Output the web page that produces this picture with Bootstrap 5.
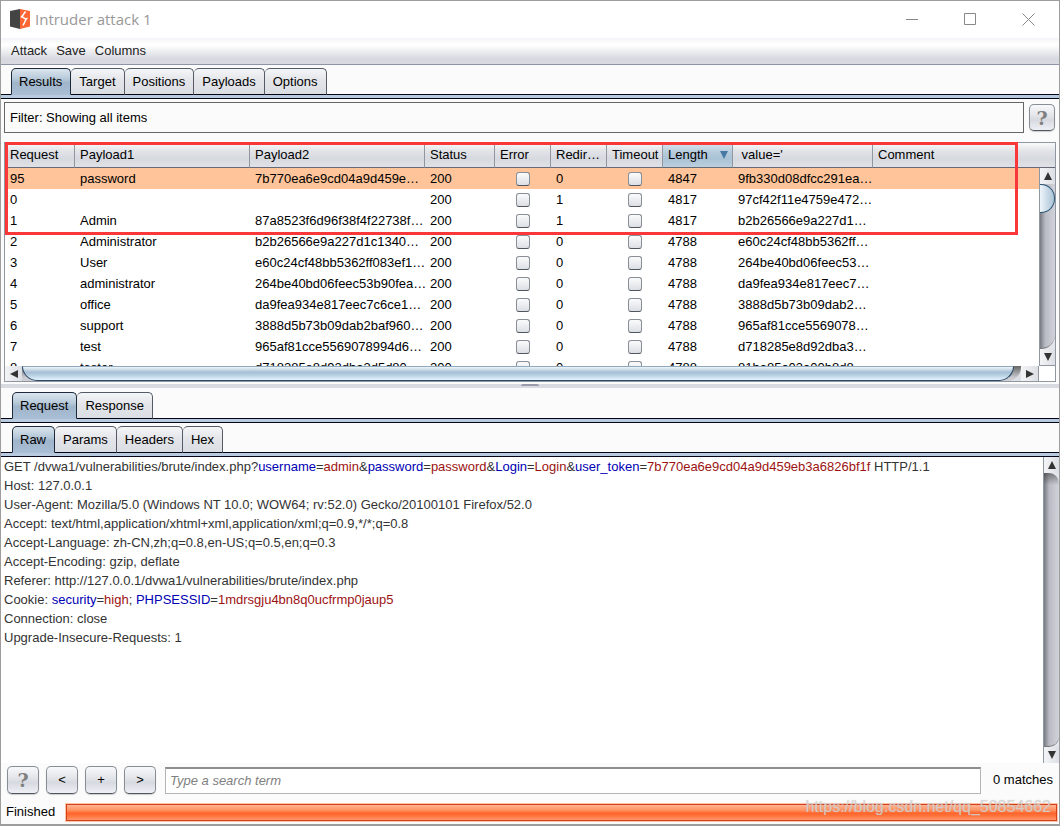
<!DOCTYPE html>
<html lang="en">
<head>
<meta charset="utf-8">
<meta name="viewport" content="width=device-width, initial-scale=1">
<title>Intruder attack 1</title>
<link href="https://cdn.jsdelivr.net/npm/bootstrap@5.3.0/dist/css/bootstrap.min.css" rel="stylesheet">
<style>
:root{--line:#050518}
html,body{height:100%}
body{font:13px/20px "Liberation Sans",Arial,sans-serif;color:#000;background:#fbfbfb}
.frame{min-height:100vh;border:1px solid #9d9d9d;border-bottom-width:2px;overflow:hidden}
.titlebar{height:37px;background:#fff;padding:0 2px 1px 8px}
.titlebar h1{font:15px/22px "Open Sans","Noto Sans",sans-serif;color:#999}
.winbtn{width:58px;border:0;background:none;padding:0}
.menus{height:27px;padding-left:10px;gap:9px;background:linear-gradient(#f3f5f8,#fff 25%,#fafafb 35%,#d6d9df 80%,#d6d9df);border-bottom:1px solid #8c94a6}
.menus a{color:#222;text-decoration:none}
.tabs{padding:3px 10px 0;border-bottom:1px solid var(--line)}
.tabs.inner{padding-left:11px}
.tabs button{height:27px;padding:0 8px;margin-bottom:-1px;border:1px solid #555b66;border-left-width:0;border-bottom-color:var(--line);border-radius:5px 5px 0 0;background:linear-gradient(#f5f6f8,#e3e5e9 45%,#dadde3);white-space:nowrap}
.tabs button.active{padding:0 8px 0 7px;border:1px solid #1c2a3c;border-bottom-color:#a9bed4;background:linear-gradient(#dbe5ee,#b6c9d9 40%,#9fb5ca 55%,#a9bed4)}
.rail{height:4px;background:#b8cade;border-bottom:1px solid var(--line);flex:none}
.filter-row{padding:3px 4px 0 3px;gap:5px}
.filter{height:31px;border:1px solid #666;line-height:29px;padding:0 5px}
.softbtn{height:28px;width:32px;padding:0;flex:none;border:1px solid #888e96;border-bottom-color:#50555e;border-radius:5px;background:linear-gradient(#f8f9fb,#e4e6ea 40%,#d6d9df 60%,#eef0f6);box-shadow:0 1px 1px #ccc}
.softbtn.help{font:bold 19px/22px "DejaVu Serif",serif;color:#808080}
.softbtn.top{width:26px;height:27px}
.results{margin:9px 3px 0;border:1px solid #9197a1;background:#fff}
.viewport{overflow:hidden;height:223px}
.grid{table-layout:fixed;width:100%;border-collapse:separate;border-spacing:0;line-height:21px}
.grid th{font-weight:400;height:25px;line-height:22px;padding:0 0 0 5px;border-right:1px solid #9197a1;border-bottom:1px solid #646a75;background:linear-gradient(#fafafb,#e3e5e9 30%,#d6d9df 65%,#dfe1e6);white-space:nowrap;overflow:hidden}
.grid th:last-child{border-right:0}
.grid th.sorted{background:linear-gradient(#dae4ec,#b5cbdc 40%,#a9c2d5 65%,#bccfde)}
.grid td{padding:0 0 0 5px;height:21px;white-space:nowrap;overflow:hidden}
.grid td.tick{padding:0}
.grid tr.picked td{background:#ffc499}
.grid input{appearance:none;display:block;width:14px;height:14px;margin:0 auto;border:1px solid #898e97;border-bottom-color:#50555e;border-radius:3px;background:linear-gradient(#fbfbfc,#dcdfe4)}
.vbar{width:16px;border-left:1px solid #9197a1;background:#e4e6eb}
.results .vbar{position:absolute;right:0;top:25px;bottom:15px;border-bottom:1px solid #9197a1}
.vtrack{background:linear-gradient(#3338,#3330 12px),linear-gradient(90deg,#787a82,#b9bbc4 35%,#d2d3da);border-radius:0 10px 10px 0;border-bottom:1px solid #777}
.results .vtrack{background:linear-gradient(90deg,#787a82,#b9bbc4 35%,#d2d3da);border-radius:0 0 14px 0}
.arrow{border:0;padding:0;background:linear-gradient(90deg,#f3f4f6,#dcdfe4);display:flex;align-items:center;justify-content:center;height:16px;flex:none}
.vthumb{height:29px;border:1px solid #2f5878;border-left:0;border-radius:0 14px 14px 0;background:linear-gradient(90deg,#eef5fa,#a9c2d6)}
.hbar{height:15px;margin-right:16px;background:#dcdfe4;border-right:1px solid #9197a1}
.hbar .arrow{width:17px;height:15px}
.htrack{padding-right:7px;border-radius:0 0 14px 0;background:linear-gradient(#666,#ccced4 80%)}
.hthumb{height:15px;border:1px solid #2b4964;border-top-color:#8fa9bf;border-radius:0 0 16px 16px;background:linear-gradient(#eef5fa,#a7bfd5 40%,#b5cde0 60%,#e4f4fe)}
.mark-box{left:0;right:37px;top:-1px;height:93px;border:3px solid #fb3839;pointer-events:none;z-index:3}
.divider{height:7px;padding-top:2px}
.divider i{display:block;height:4px;background:#d9dae1}
.divider b{display:block;width:18px;height:2px;background:#9a9cac;border-radius:2px 2px 0 0;margin:auto}
.message{background:#fff}
.lines{padding-left:3px;line-height:19px;color:#333;min-width:0}
.lines p{margin:0}
.k{color:#0000b4}
.v{color:#9c1212}
.finder{padding:3px 6px 0;gap:7px}
.search{height:27px;border:1px solid #b5b5b5;border-top:2px solid #8e8e8e;border-radius:0;padding:0 4px;margin:0 5px 0 2px;background:#fff;min-width:0;outline:0}
.search::placeholder{font-style:italic;color:#808080}
.status{padding:8px 2px 2px 5px;gap:11px}
.done{height:17px;border:1px solid #d3401c;border-radius:0;background:linear-gradient(#ffb493,#ff9262 35%,#ff6429 55%,#ff7640 75%,#ff9a6c);box-shadow:0 0 0 1px #ffc3a8}
.stamp{right:8px;bottom:7px;font-size:16px;line-height:20px;color:#dcdcdcc0;text-shadow:0 0 1px #9998}
</style>
</head>
<body>
<main class="frame d-flex flex-column position-relative">
<header class="titlebar d-flex align-items-center">
<svg width="22" height="20" viewBox="0 0 22 20" aria-hidden="true"><path d="M1 2 11 0v20L1 17.500z" fill="#444"/><path d="M11 0l10 2v15.500L11 20z" fill="#ff6633"/><path d="M16.500 2.500 13 7.500l4 3-3 6M14 6l-2 2.500M17 10l1.500-1" fill="none" stroke="#fff" stroke-width="1.500"/></svg>
<h1 class="m-0 ps-1 flex-grow-1">Intruder attack 1</h1>
<button class="winbtn" aria-label="Minimize"><svg width="13" height="13"><path d="M0 6.500h12" stroke="#888"/></svg></button>
<button class="winbtn" aria-label="Maximize"><svg width="13" height="13"><path d="M.5.5h11v11H.5z" fill="none" stroke="#888"/></svg></button>
<button class="winbtn" aria-label="Close"><svg width="13" height="13"><path d="m.5.5 12 12m0-12-12 12" stroke="#888"/></svg></button>
</header>
<nav class="menus d-flex align-items-center"><a href="#">Attack</a><a href="#">Save</a><a href="#">Columns</a></nav>
<div class="tabs d-flex"><button class="active">Results</button><button>Target</button><button>Positions</button><button>Payloads</button><button>Options</button></div>
<div class="rail"></div>
<div class="d-flex align-items-center filter-row"><div class="filter flex-grow-1">Filter: Showing all items</div><button class="softbtn help top">?</button></div>
<section class="results position-relative">
<div class="viewport"><table class="grid"><colgroup><col style="width:70px"><col style="width:175px"><col style="width:175px"><col style="width:70px"><col style="width:56px"><col style="width:56px"><col style="width:56px"><col style="width:70px"><col style="width:140px"><col></colgroup>
<thead><tr><th>Request</th><th>Payload1</th><th>Payload2</th><th>Status</th><th>Error</th><th>Redir…</th><th>Timeout</th><th class="sorted"><span class="d-flex justify-content-between align-items-center pe-1">Length<svg width="8" height="8"><path d="M0 0h8L4 8z" fill="#4878a4"/></svg></span></th><th>&nbsp;value='</th><th>Comment</th></tr></thead>
<tbody id="rows"></tbody></table></div>
<div class="vbar d-flex flex-column"><button class="arrow" aria-label="Scroll up"><svg width="8" height="8"><path d="M0 8h8L4 0z" fill="#333"/></svg></button><div class="vtrack flex-grow-1"><div class="vthumb"></div></div><button class="arrow" aria-label="Scroll down"><svg width="8" height="8"><path d="M0 0h8L4 8z" fill="#333"/></svg></button></div>
<div class="hbar d-flex"><button class="arrow" aria-label="Scroll left"><svg width="8" height="8"><path d="M8 0v8L0 4z" fill="#333"/></svg></button><div class="htrack flex-grow-1"><div class="hthumb"></div></div><button class="arrow" aria-label="Scroll right"><svg width="8" height="8"><path d="M0 0v8l8-4z" fill="#333"/></svg></button></div>
<div class="mark-box position-absolute"></div>
</section>
<div class="divider"><i><b></b></i></div>
<div class="tabs inner d-flex"><button class="active">Request</button><button>Response</button></div><div class="rail"></div>
<div class="tabs inner d-flex"><button class="active">Raw</button><button>Params</button><button>Headers</button><button>Hex</button></div><div class="rail"></div>
<section class="message d-flex flex-grow-1"><div class="lines flex-grow-1">
<p><span>GET /dvwa1/vulnerabilities/brute/index.php?</span><span class="k">username</span>=<span class="v">admin</span>&amp;<span class="k">password</span>=<span class="v">password</span>&amp;<span class="k">Login</span>=<span class="v">Login</span>&amp;<span class="k">user_token</span>=<span class="v">7b770ea6e9cd04a9d459eb3a6826bf1f</span> HTTP/1.1</p>
<p>Host: 127.0.0.1</p>
<p>User-Agent: Mozilla/5.0 (Windows NT 10.0; WOW64; rv:52.0) Gecko/20100101 Firefox/52.0</p>
<p>Accept: text/html,application/xhtml+xml,application/xml;q=0.9,*/*;q=0.8</p>
<p>Accept-Language: zh-CN,zh;q=0.8,en-US;q=0.5,en;q=0.3</p>
<p>Accept-Encoding: gzip, deflate</p>
<p>Referer: http://127.0.0.1/dvwa1/vulnerabilities/brute/index.php</p>
<p>Cookie: <span class="k">security</span>=<span class="v">high</span>; <span class="k">PHPSESSID</span>=<span class="v">1mdrsgju4bn8q0ucfrmp0jaup5</span></p>
<p>Connection: close</p>
<p>Upgrade-Insecure-Requests: 1</p>
</div><div class="vbar d-flex flex-column flex-shrink-0"><button class="arrow" aria-label="Scroll up"><svg width="8" height="8"><path d="M0 8h8L4 0z" fill="#333"/></svg></button><div class="vtrack flex-grow-1"></div><button class="arrow" aria-label="Scroll down"><svg width="8" height="8"><path d="M0 0h8L4 8z" fill="#333"/></svg></button></div></section>
<div class="finder d-flex align-items-center"><button class="softbtn help">?</button><button class="softbtn">&lt;</button><button class="softbtn">+</button><button class="softbtn">&gt;</button><input class="search flex-grow-1" type="text" placeholder="Type a search term" aria-label="Search term"><span>0 matches</span></div>
<div class="status d-flex align-items-center"><span>Finished</span><div class="done flex-grow-1" role="progressbar" aria-label="Attack progress" aria-valuenow="100" aria-valuemin="0" aria-valuemax="100"></div></div>
<div class="stamp position-absolute">https://blog.csdn.net/qq_50854662</div>
</main>
<script>
const data=[
[95,'password','7b770ea6e9cd04a9d459e…',0,4847,'9fb330d08dfcc291ea…'],
[0,'','',1,4817,'97cf42f11e4759e472…'],
[1,'Admin','87a8523f6d96f38f4f22738f…',1,4817,'b2b26566e9a227d1…'],
[2,'Administrator','b2b26566e9a227d1c1340…',0,4788,'e60c24cf48bb5362ff…'],
[3,'User','e60c24cf48bb5362ff083ef1…',0,4788,'264be40bd06feec53…'],
[4,'administrator','264be40bd06feec53b90fea…',0,4788,'da9fea934e817eec7…'],
[5,'office','da9fea934e817eec7c6ce1…',0,4788,'3888d5b73b09dab2…'],
[6,'support','3888d5b73b09dab2baf960…',0,4788,'965af81cce5569078…'],
[7,'test','965af81cce5569078994d6…',0,4788,'d718285e8d92dba3…'],
[8,'tester','d718285e8d92dba3d5d80…',0,4788,'81ba85a03a00b8d8…']];
document.getElementById('rows').innerHTML=data.map((r,i)=>`<tr class="${i?'':'picked'}"><td>${r[0]}</td><td>${r[1]}</td><td>${r[2]}</td><td>200</td><td class="tick"><input type="checkbox" aria-label="Error, request ${r[0]}"></td><td>${r[3]}</td><td class="tick"><input type="checkbox" aria-label="Timeout, request ${r[0]}"></td><td>${r[4]}</td><td>${r[5]}</td><td></td></tr>`).join('');
</script>
<script src="https://cdn.jsdelivr.net/npm/bootstrap@5.3.0/dist/js/bootstrap.bundle.min.js"></script>
</body>
</html>
